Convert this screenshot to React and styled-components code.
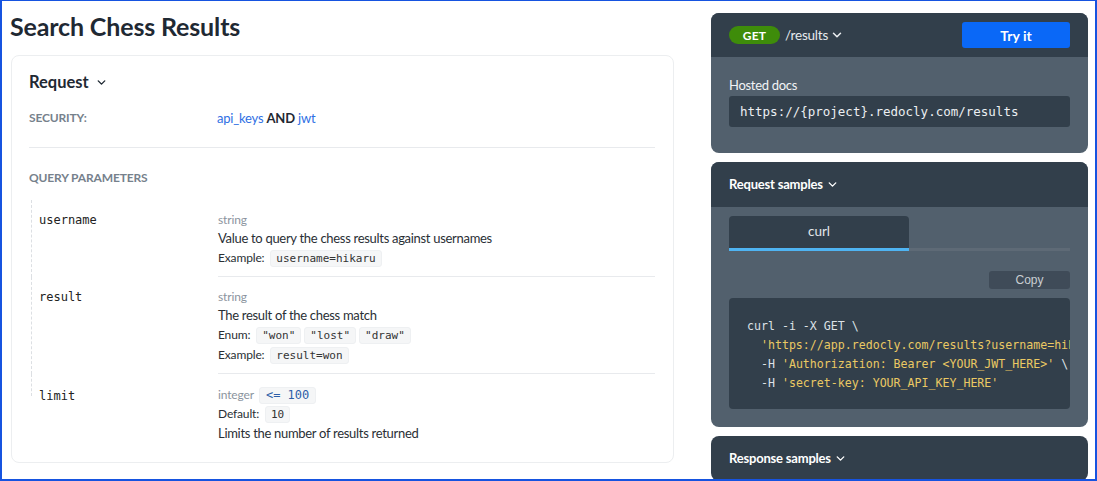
import React from "react";
import styled, { createGlobalStyle } from "styled-components";
import { ChevronDown } from "lucide-react";

const GlobalStyle = createGlobalStyle`
  html, body {
    margin: 0;
    padding: 0;
    background: #ffffff;
  }
  * {
    box-sizing: border-box;
  }
`;

const sans = `Lato, "Liberation Sans", sans-serif`;
const mono = `"DejaVu Sans Mono", "Liberation Mono", monospace`;

export default function App() {
  return (
    <>
      <GlobalStyle />
      <Page>
        <LeftColumn>
          <Title>Search Chess Results</Title>
          <Card>
            <SectionToggle>
              Request <ChevronDown size={13} strokeWidth={2.6} />
            </SectionToggle>
            <SecurityRow>
              <Label>Security:</Label>
              <div>
                <Link>api_keys</Link> <strong>AND</strong> <Link>jwt</Link>
              </div>
            </SecurityRow>
            <Label as="h3" $spaced>
              Query parameters
            </Label>
            <Params>
              <Param>
                <ParamName>username</ParamName>
                <ParamInfo>
                  <TypeLine>string</TypeLine>
                  <Description>Value to query the chess results against usernames</Description>
                  <MetaLine>
                    Example: <Chip>username=hikaru</Chip>
                  </MetaLine>
                </ParamInfo>
              </Param>
              <Param>
                <ParamName>result</ParamName>
                <ParamInfo>
                  <TypeLine>string</TypeLine>
                  <Description>The result of the chess match</Description>
                  <MetaLine>
                    Enum: <Chip>"won"</Chip> <Chip>"lost"</Chip> <Chip>"draw"</Chip>
                  </MetaLine>
                  <MetaLine>
                    Example: <Chip>result=won</Chip>
                  </MetaLine>
                </ParamInfo>
              </Param>
              <Param $last>
                <ParamName $last>limit</ParamName>
                <ParamInfo $last>
                  <TypeLine>
                    integer <Chip $accent>&lt;= 100</Chip>
                  </TypeLine>
                  <MetaLine>
                    Default: <Chip>10</Chip>
                  </MetaLine>
                  <Description>Limits the number of results returned</Description>
                </ParamInfo>
              </Param>
            </Params>
          </Card>
        </LeftColumn>

        <RightColumn>
          <Panel>
            <PanelHeader>
              <Method>GET</Method>
              <Path>
                /results <ChevronDown size={14} strokeWidth={2.6} />
              </Path>
              <TryButton>Try it</TryButton>
            </PanelHeader>
            <PanelBody>
              <BodyLabel>Hosted docs</BodyLabel>
              <UrlBox>https://&#123;project&#125;.redocly.com/results</UrlBox>
            </PanelBody>
          </Panel>

          <Panel>
            <PanelHeader $tall>
              <PanelTitle>
                Request samples <ChevronDown size={13} strokeWidth={2.6} />
              </PanelTitle>
            </PanelHeader>
            <PanelBody $samples>
              <Tabs>
                <Tab $active>curl</Tab>
              </Tabs>
              <CopyRow>
                <CopyButton>Copy</CopyButton>
              </CopyRow>
              <Code>
                <Plain>curl -i -X GET \</Plain>
                {"\n  "}
                <Str>'https://app.redocly.com/results?username=hikaru&amp;result=won&amp;limit=10'</Str>
                <Plain> \</Plain>
                {"\n  "}
                <Plain>-H </Plain>
                <Str>'Authorization: Bearer &lt;YOUR_JWT_HERE&gt;'</Str>
                <Plain> \</Plain>
                {"\n  "}
                <Plain>-H </Plain>
                <Str>'secret-key: YOUR_API_KEY_HERE'</Str>
              </Code>
            </PanelBody>
          </Panel>

          <Panel>
            <PanelHeader $tall>
              <PanelTitle>
                Response samples <ChevronDown size={13} strokeWidth={2.6} />
              </PanelTitle>
            </PanelHeader>
          </Panel>
        </RightColumn>
      </Page>
    </>
  );
}

const Page = styled.div`
  height: 481px;
  overflow: hidden;
  border: 1px solid #1653e0;
  border-left-width: 2px;
  border-right-width: 2px;
  border-bottom-width: 2px;
  padding: 0 7px 0 9px;
  display: grid;
  grid-template-columns: 1fr 377px;
  column-gap: 37px;
  font-family: ${sans};
  color: #1f2328;
`;

const LeftColumn = styled.div`
  display: flex;
  flex-direction: column;
  min-width: 0;
`;

const Title = styled.h1`
  margin: 8px 0 12px -1px;
  font-size: 25px;
  line-height: 34px;
  font-weight: 700;
  letter-spacing: -0.15px;
  color: #1f2933;
`;

const Card = styled.section`
  border: 1px solid #eceef0;
  border-radius: 8px;
  padding: 14px 18px 19px 17px;
`;

const SectionToggle = styled.h2`
  margin: 0;
  display: flex;
  align-items: center;
  gap: 6px;
  font-size: 16.5px;
  line-height: 24px;
  font-weight: 700;
  color: #1f2933;
`;

const SecurityRow = styled.div`
  display: grid;
  grid-template-columns: 188px 1fr;
  align-items: center;
  margin-top: 14px;
  padding-bottom: 19px;
  border-bottom: 1px solid #e8eaed;
  font-size: 13px;
  letter-spacing: -0.2px;
  line-height: 20px;

  strong {
    font-weight: 700;
    color: #1f2933;
  }
`;

const Label = styled.div`
  margin: ${(p) => (p.$spaced ? "20px 0 12px" : "0")};
  font-size: 12px;
  line-height: 20px;
  font-weight: 700;
  letter-spacing: -0.15px;
  text-transform: uppercase;
  color: #76818c;
`;

const Link = styled.span`
  color: #2f6fe4;
`;

const Params = styled.div`
  display: flex;
  flex-direction: column;
`;

const Param = styled.div`
  display: grid;
  grid-template-columns: 189px 1fr;
`;

const ParamName = styled.div`
  position: relative;
  padding: ${(p) => (p.$last ? "12px" : "10px")} 0 0 10px;
  font-family: ${mono};
  font-size: 12px;
  line-height: 20px;
  color: #222;

  &::before {
    content: "";
    position: absolute;
    left: 2px;
    top: 0;
    height: ${(p) => (p.$last ? "22px" : "100%")};
    border-left: 1px dashed #dcdfe3;
  }
`;

const ParamInfo = styled.div`
  display: flex;
  flex-direction: column;
  padding: ${(p) => (p.$last ? "12px 0 0" : "11px 0 8px")};
  border-bottom: ${(p) => (p.$last ? "none" : "1px solid #e8eaed")};
`;

const TypeLine = styled.div`
  font-size: 12px;
  letter-spacing: -0.15px;
  line-height: 18px;
  color: #8b949e;
  display: flex;
  align-items: center;
  gap: 5px;
`;

const Description = styled.div`
  font-size: 13px;
  letter-spacing: -0.3px;
  line-height: 19px;
  color: #2a2f35;
`;

const MetaLine = styled.div`
  display: flex;
  align-items: center;
  gap: 3px;
  font-size: 12px;
  letter-spacing: -0.15px;
  line-height: 20px;
  color: #2a2f35;
  white-space: pre;
`;

const Chip = styled.code`
  font-family: ${mono};
  font-size: ${(p) => (p.$accent ? "12px" : "11px")};
  letter-spacing: 0;
  line-height: 13px;
  padding: 1px ${(p) => (p.$accent ? "6px" : "5px")};
  border: 1px solid #eef0f2;
  border-radius: 3px;
  background: #f5f6f7;
  color: ${(p) => (p.$accent ? "#2c5ea8" : "#333")};
`;

const RightColumn = styled.div`
  display: flex;
  flex-direction: column;
  gap: 9px;
  padding-top: 12px;
  min-width: 0;
`;

const Panel = styled.section`
  border-radius: 8px;
  overflow: hidden;
  background: #52606d;
  flex-shrink: 0;
`;

const PanelHeader = styled.header`
  display: flex;
  align-items: center;
  height: ${(p) => (p.$tall ? "45px" : "44px")};
  padding: 0 18px ${(p) => (p.$tall ? "1px" : "0")};
  background: #323f4b;
  color: #ffffff;
`;

const Method = styled.span`
  display: inline-flex;
  align-items: center;
  justify-content: center;
  width: 51px;
  height: 18px;
  border-radius: 9px;
  background: #3e8c0a;
  font-size: 12px;
  font-weight: 700;
  letter-spacing: 0.3px;
`;

const Path = styled.span`
  display: inline-flex;
  align-items: center;
  gap: 2px;
  margin-left: 5px;
  font-size: 13.5px;
  letter-spacing: -0.2px;
  color: #e8ebee;
`;

const TryButton = styled.button`
  margin-left: auto;
  width: 108px;
  height: 26px;
  border: none;
  border-radius: 3px;
  background: #0a68f7;
  color: #fff;
  font-family: ${sans};
  font-size: 14px;
  font-weight: 700;
`;

const PanelBody = styled.div`
  padding: ${(p) => (p.$samples ? "9px 18px 18px" : "19px 18px 26px")};
`;

const BodyLabel = styled.div`
  font-size: 13px;
  letter-spacing: -0.3px;
  line-height: 18px;
  color: #f1f3f5;
  margin-bottom: 2px;
`;

const UrlBox = styled.div`
  height: 31px;
  display: flex;
  align-items: center;
  padding-left: 11px;
  border-radius: 3px;
  background: #323f4b;
  font-family: ${mono};
  font-size: 12.5px;
  color: #eceff2;
`;

const PanelTitle = styled.h4`
  margin: 0;
  display: flex;
  align-items: center;
  gap: 3px;
  font-size: 13px;
  letter-spacing: -0.2px;
  font-weight: 700;
  color: #ffffff;
`;

const Tabs = styled.div`
  display: flex;
  border-bottom: 3px solid #5e6a76;
`;

const Tab = styled.div`
  width: 180px;
  height: 35px;
  margin-bottom: -3px;
  display: flex;
  align-items: center;
  justify-content: center;
  padding-bottom: 3px;
  border-radius: 4px 4px 0 0;
  background: ${(p) => (p.$active ? "#323f4b" : "transparent")};
  border-bottom: 3px solid ${(p) => (p.$active ? "#4fb4f2" : "transparent")};
  font-size: 13.5px;
  color: #e4e8ec;
`;

const CopyRow = styled.div`
  display: flex;
  justify-content: flex-end;
  margin-top: 20px;
`;

const CopyButton = styled.button`
  width: 81px;
  height: 18px;
  border: none;
  border-radius: 3px;
  background: #3f4b58;
  color: #c9ced3;
  font-family: "Liberation Sans", Arial, sans-serif;
  font-size: 12px;
  padding: 0;
`;

const Code = styled.pre`
  margin: 9px 0 0;
  padding: 19px 18px 16px;
  border-radius: 4px;
  background: #323f4b;
  font-family: ${mono};
  font-size: 11.6px;
  line-height: 19px;
  white-space: pre;
  overflow: hidden;
`;

const Plain = styled.span`
  color: #dde2e7;
`;

const Str = styled.span`
  color: #ebc963;
`;
